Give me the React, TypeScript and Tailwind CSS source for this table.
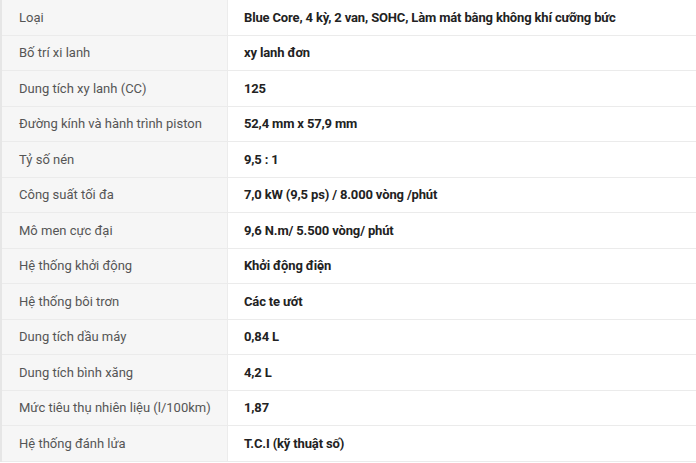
const specs = [
  ["Loại", "Blue Core, 4 kỳ, 2 van, SOHC, Làm mát bằng không khí cưỡng bức"],
  ["Bố trí xi lanh", "xy lanh đơn"],
  ["Dung tích xy lanh (CC)", "125"],
  ["Đường kính và hành trình piston", "52,4 mm x 57,9 mm"],
  ["Tỷ số nén", "9,5 : 1"],
  ["Công suất tối đa", "7,0 kW (9,5 ps) / 8.000 vòng /phút"],
  ["Mô men cực đại", "9,6 N.m/ 5.500 vòng/ phút"],
  ["Hệ thống khởi động", "Khởi động điện"],
  ["Hệ thống bôi trơn", "Các te ướt"],
  ["Dung tích dầu máy", "0,84 L"],
  ["Dung tích bình xăng", "4,2 L"],
  ["Mức tiêu thụ nhiên liệu (l/100km)", "1,87"],
  ["Hệ thống đánh lửa", "T.C.I (kỹ thuật số)"],
]

export default function App() {
  return (
    <div className="w-[696px] h-[463px] bg-white overflow-hidden font-['Roboto',sans-serif] text-[13px]">
      <div className="border-l-2 border-[#e6e6e6]">
        {specs.map(([label, value]) => (
          <div key={label} className="flex h-[35.5px] border-b border-[#ebebeb]">
            <div className="w-[226px] shrink-0 bg-[#f6f6f6] flex items-center pl-[17px] text-[#555] border-r border-[#ececec]">
              {label}
            </div>
            <div className="flex-1 flex items-center pl-[16px] font-bold text-[#222] tracking-[-0.15px]">{value}</div>
          </div>
        ))}
      </div>
    </div>
  )
}
